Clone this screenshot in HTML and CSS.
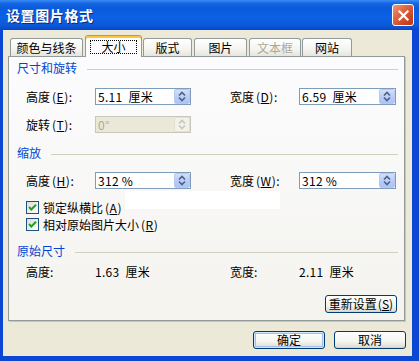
FILE: index.html
```html
<!DOCTYPE html>
<html lang="zh-CN">
<head>
<meta charset="utf-8">
<title>设置图片格式</title>
<link rel="stylesheet" href="styles.css">
</head>
<body>
<div class="window">
  <div class="titlebar">
    <span class="title">设置图片格式</span>
    <span class="close"><svg width="13" height="13" viewBox="0 0 13 13"><path d="M2.5 2.5 L10.5 10.5 M10.5 2.5 L2.5 10.5" stroke="#fff" stroke-width="2.2" stroke-linecap="square"/></svg></span>
  </div>
  <div class="frame">
    <div class="tabs">
      <div class="tab t1">颜色与线条</div>
      <div class="tab active t2"><span class="focus">大小</span></div>
      <div class="tab t3">版式</div>
      <div class="tab t4">图片</div>
      <div class="tab disabled t5">文本框</div>
      <div class="tab t6">网站</div>
    </div>
    <div class="panel">
      <div class="group-title g1"><span>尺寸和旋转</span><i></i></div>
      <div class="row r1">
        <span class="lbl">高度<span class="mn">(<u>E</u>):</span></span>
        <div class="spin"><span class="val">5.11&nbsp; 厘米</span><span class="sbtn"><svg width="14" height="13" viewBox="0 0 14 13"><path d="M4 5.5 L7 2.5 L10 5.5 M4 7.5 L7 10.5 L10 7.5" fill="none" stroke="#4D6185" stroke-width="1.6"/></svg></span></div>
        <span></span>
        <span class="lbl">宽度<span class="mn">(<u>D</u>):</span></span>
        <div class="spin"><span class="val">6.59&nbsp; 厘米</span><span class="sbtn"><svg width="14" height="13" viewBox="0 0 14 13"><path d="M4 5.5 L7 2.5 L10 5.5 M4 7.5 L7 10.5 L10 7.5" fill="none" stroke="#4D6185" stroke-width="1.6"/></svg></span></div>
      </div>
      <div class="row r2">
        <span class="lbl">旋转<span class="mn">(<u>T</u>):</span></span>
        <div class="spin off"><span class="val">0°</span><span class="sbtn"><svg width="14" height="13" viewBox="0 0 14 13"><path d="M4 5.5 L7 2.5 L10 5.5 M4 7.5 L7 10.5 L10 7.5" fill="none" stroke="#C9C7BA" stroke-width="1.6"/></svg></span></div>
      </div>
      <div class="group-title g2"><span>缩放</span><i></i></div>
      <div class="row r3">
        <span class="lbl">高度<span class="mn">(<u>H</u>):</span></span>
        <div class="spin"><span class="val">312 %</span><span class="sbtn"><svg width="14" height="13" viewBox="0 0 14 13"><path d="M4 5.5 L7 2.5 L10 5.5 M4 7.5 L7 10.5 L10 7.5" fill="none" stroke="#4D6185" stroke-width="1.6"/></svg></span></div>
        <span></span>
        <span class="lbl">宽度<span class="mn">(<u>W</u>):</span></span>
        <div class="spin"><span class="val">312 %</span><span class="sbtn"><svg width="14" height="13" viewBox="0 0 14 13"><path d="M4 5.5 L7 2.5 L10 5.5 M4 7.5 L7 10.5 L10 7.5" fill="none" stroke="#4D6185" stroke-width="1.6"/></svg></span></div>
      </div>
      <div class="checks">
        <div class="check"><span class="box"><svg width="11" height="11" viewBox="0 0 11 11"><path d="M2 5 L4.3 7.5 L9 2.8" fill="none" stroke="#21A121" stroke-width="2"/></svg></span><span>锁定纵横比<span class="mn">(<u>A</u>)</span></span></div>
        <div class="check"><span class="box"><svg width="11" height="11" viewBox="0 0 11 11"><path d="M2 5 L4.3 7.5 L9 2.8" fill="none" stroke="#21A121" stroke-width="2"/></svg></span><span>相对原始图片大小<span class="mn">(<u>R</u>)</span></span></div>
      </div>
      <div class="whitebox"></div>
      <div class="group-title g3"><span>原始尺寸</span><i></i></div>
      <div class="row orig">
        <span class="lbl">高度:</span>
        <span class="oval">1.63&nbsp; 厘米</span>
        <span></span>
        <span class="lbl">宽度:</span>
        <span class="oval">2.11&nbsp; 厘米</span>
      </div>
      <div class="reset-row"><span class="btn reset">重新设置<span class="mn">(<u>S</u>)</span></span></div>
    </div>
    <div class="actions">
      <span class="btn default">确定</span>
      <span class="btn">取消</span>
    </div>
  </div>
</div>
</body>
</html>
```

FILE: styles.css
```css
* { box-sizing: border-box; }
html, body { margin: 0; padding: 0; }
body {
  width: 419px;
  height: 361px;
  overflow: hidden;
  font-family: "Noto Sans CJK SC", "Noto Sans", sans-serif;
  font-size: 12px;
  color: #000;
  background: #0B47D2;
}
u { text-decoration: underline; text-underline-offset: 1px; }
.mn { margin-left: 2px; letter-spacing: 0.5px; }

.window {
  width: 419px;
  height: 361px;
  display: flex;
  flex-direction: column;
}

.titlebar {
  height: 30px;
  flex: none;
  display: flex;
  align-items: center;
  justify-content: space-between;
  padding: 0 5px 0 6px;
  background: linear-gradient(#3D8DF6 0px, #1868E4 3px, #0A5BDB 8px, #0C60E4 18px, #0A58D6 26px, #0846C8 30px);
}
.title {
  color: #fff;
  font-weight: bold;
  font-size: 14px;
  line-height: 16px;
  text-shadow: 1px 1px 0 #0B2B8A;
  letter-spacing: 0.6px;
}
.close {
  width: 22px;
  height: 22px;
  border: 1px solid #fff;
  border-radius: 3px;
  background: linear-gradient(135deg, #EE9A7E 0%, #DD6441 40%, #C94422 75%, #B8381A 100%);
  display: flex;
  align-items: center;
  justify-content: center;
}

.frame {
  flex: 1;
  display: flex;
  flex-direction: column;
  background: #ECE9D8;
  border-style: solid;
  border-color: #0B47D2;
  border-width: 0 7px 5px 3px;
  padding: 5px 6px 7px 5px;
}

.tabs {
  height: 21px;
  flex: none;
  display: flex;
  align-items: flex-end;
  padding-left: 2px;
  position: relative;
  z-index: 1;
}
.tab {
  height: 18px;
  border: 1px solid #919B9C;
  border-bottom: none;
  border-radius: 3px 3px 0 0;
  background: linear-gradient(#FFFFFF, #F5F4F0 60%, #E6E4DB);
  display: flex;
  align-items: center;
  justify-content: center;
  line-height: 14px;
}
.t1 { width: 73px; }
.t2 { width: 57px; margin-left: 2px; }
.t3 { width: 49px; margin-left: 1px; }
.t4 { width: 53px; margin-left: 2px; }
.t5 { width: 52px; margin-left: 2px; }
.t6 { width: 50px; margin-left: 1px; }
.tab.disabled { color: #ACA899; }
.tab.active {
  height: 22px;
  margin-bottom: -1px;
  background: #FCFCFE;
  border-top: 1px solid #E68B2C;
  box-shadow: inset 0 2px 0 #FFC83C;
  padding-top: 1px;
}
.focus {
  display: block;
  width: 47px;
  height: 14px;
  line-height: 12px;
  border: 1px dotted #000;
  text-align: center;
}

.panel {
  height: 265px;
  flex: none;
  margin-right: 1px;
  border: 1px solid #919B9C;
  background: linear-gradient(#FCFCFE, #F4F3EE);
  box-shadow: 1px 1px 0 #C9C6B8;
  position: relative;
}

.group-title {
  display: flex;
  align-items: center;
  height: 14px;
  line-height: 14px;
  padding: 0 6px 0 8px;
  color: #0046D5;
}
.group-title i {
  flex: 1;
  height: 1px;
  margin: 2px 0 0 10px;
  background: #D0D0BF;
}
.g1 { margin-top: 4px; }
.g2 { margin-top: 13px; }
.g3 { margin-top: 11px; }

.row {
  display: grid;
  grid-template-columns: 69px 96px 39px 69px 97px;
  align-items: center;
  height: 17px;
  padding-left: 17px;
}
.r1 { margin-top: 13px; }
.r2 { margin-top: 11px; }
.r3 { margin-top: 12px; }
.lbl { line-height: 14px; white-space: nowrap; }

.spin {
  height: 17px;
  border: 1px solid #7F9DB9;
  background: #fff;
  display: flex;
  align-items: center;
}
.val {
  flex: 1;
  padding-left: 2px;
  line-height: 14px;
  white-space: nowrap;
  letter-spacing: 0.3px;
}
.sbtn {
  width: 16px;
  height: 15px;
  border: 1px solid #B7C8F2;
  border-radius: 2px;
  background: linear-gradient(#D3DFFC, #BACDF8 50%, #AFC3F3);
  display: flex;
  align-items: center;
  justify-content: center;
}
.spin.off {
  border-color: #C9C7BA;
  background: #EBE8D7;
  color: #ACA899;
}
.spin.off .sbtn {
  border-color: #E3E1D6;
  background: #F2F1EA;
}

.checks { margin-top: 10px; }
.check {
  display: flex;
  align-items: center;
  gap: 4px;
  height: 17px;
  padding-left: 17px;
  line-height: 14px;
}
.box {
  width: 13px;
  height: 13px;
  border: 1px solid #1C5180;
  background: linear-gradient(135deg, #DCDCD7, #FFFFFF);
  display: flex;
  align-items: center;
  justify-content: center;
}

.whitebox {
  position: absolute;
  left: 116px;
  top: 134px;
  width: 155px;
  height: 18px;
  background: #fff;
}

.orig { margin-top: 7px; height: 14px; }
.oval { line-height: 14px; white-space: nowrap; letter-spacing: 0.3px; }

.reset-row {
  display: flex;
  justify-content: flex-end;
  padding-right: 7px;
  margin-top: 16px;
}

.btn {
  width: 72px;
  height: 18px;
  border: 1px solid #003C74;
  border-radius: 3px;
  background: linear-gradient(#FFFFFF, #F4F4F0 60%, #E2DFD6 90%, #D6D0C5);
  display: flex;
  align-items: center;
  justify-content: center;
  line-height: 14px;
  white-space: nowrap;
}
.btn .mn { margin-left: 1px; letter-spacing: 0; }
.btn.default {
  box-shadow: inset 0 0 0 1px #CEE7FF, inset 0 0 0 2px #A3BEF0;
}

.actions {
  display: flex;
  justify-content: flex-end;
  gap: 9px;
  margin-top: 10px;
}
```
